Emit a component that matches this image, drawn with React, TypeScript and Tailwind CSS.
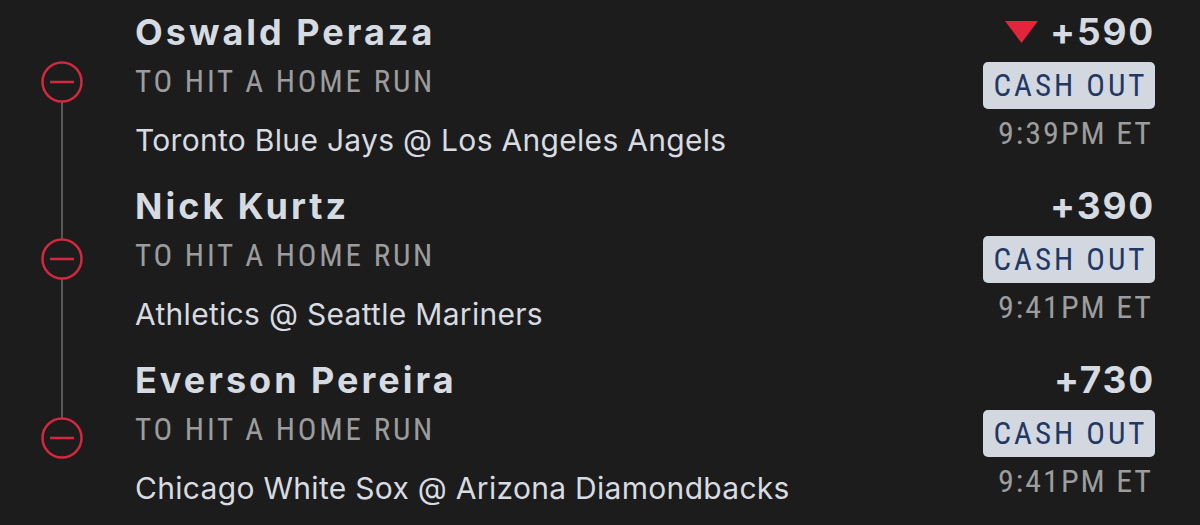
type Leg = {
  name: string;
  game: string;
  odds: string;
  time: string;
  down?: boolean;
  circleTop: number;
};

const legs: Leg[] = [
  { name: 'Oswald Peraza', game: 'Toronto Blue Jays @ Los Angeles Angels', odds: '+590', time: '9:39PM ET', down: true, circleTop: 61 },
  { name: 'Nick Kurtz', game: 'Athletics @ Seattle Mariners', odds: '+390', time: '9:41PM ET', circleTop: 64 },
  { name: 'Everson Pereira', game: 'Chicago White Sox @ Arizona Diamondbacks', odds: '+730', time: '9:41PM ET', circleTop: 69 },
];

function MinusCircle() {
  return (
    <svg width="42" height="42" viewBox="0 0 42 42" className="block">
      <circle cx="21" cy="21" r="19.5" fill="#1c1c1c" stroke="#d3283d" strokeWidth="2.5" />
      <line x1="9" y1="21" x2="33" y2="21" stroke="#d3283d" strokeWidth="2.5" />
    </svg>
  );
}

function Row({ leg }: { leg: Leg }) {
  return (
    <div className="flex h-[174px]">
      <div className="w-[135px] shrink-0 flex justify-start pl-[41px]">
        <div style={{ marginTop: leg.circleTop }} className="relative z-10 h-[42px]">
          <MinusCircle />
        </div>
      </div>
      <div className="flex-1 flex flex-col pt-[10px]">
        <div className="h-[44px] leading-[44px] text-[36px] font-bold tracking-[3px] text-[#d6dae1] font-['Inter',sans-serif]">
          {leg.name}
        </div>
        <div className="mt-[10px] h-[36px] leading-[36px] text-[31px] tracking-[2.8px] text-[#9c9c9c] font-['Roboto_Condensed',sans-serif]">
          TO HIT A HOME RUN
        </div>
        <div className="mt-[22px] h-[36px] leading-[36px] text-[30px] tracking-[0.3px] text-[#d8dbe0] font-['Inter',sans-serif]">
          {leg.game}
        </div>
      </div>
      <div className="w-[260px] shrink-0 flex flex-col items-end pr-[45px] pt-[10px]">
        <div className="h-[44px] flex items-center gap-[12px]">
          {leg.down && (
            <svg width="33" height="22" viewBox="0 0 33 22" className="block">
              <polygon points="0,0 33,0 16.5,22" fill="#e3253b" />
            </svg>
          )}
          <span className="text-[37px] font-bold leading-[44px] tracking-[1.8px] text-[#d6dae1] font-['Inter',sans-serif]">{leg.odds}</span>
        </div>
        <div className="mt-[8px] w-[172px] h-[47px] rounded-[5px] bg-[#d3d8e0] flex items-center justify-center">
          <span className="text-[31px] leading-[36px] tracking-[3px] pl-[3px] text-[#1f3964] font-['Roboto_Condensed',sans-serif]">CASH OUT</span>
        </div>
        <div className="mt-[6px] h-[36px] leading-[36px] text-[32px] tracking-[2px] text-[#9d9d9d] font-['Roboto_Condensed',sans-serif] pr-[2px]">
          {leg.time}
        </div>
      </div>
    </div>
  );
}

export default function App() {
  return (
    <div className="w-[1200px] h-[525px] bg-[#1c1c1c] overflow-hidden">
      <div className="relative">
        <div className="absolute left-[61px] top-[80px] h-[356px] w-[2px] bg-[#575757]" />
        {legs.map((leg) => (
          <Row key={leg.name} leg={leg} />
        ))}
      </div>
    </div>
  );
}
